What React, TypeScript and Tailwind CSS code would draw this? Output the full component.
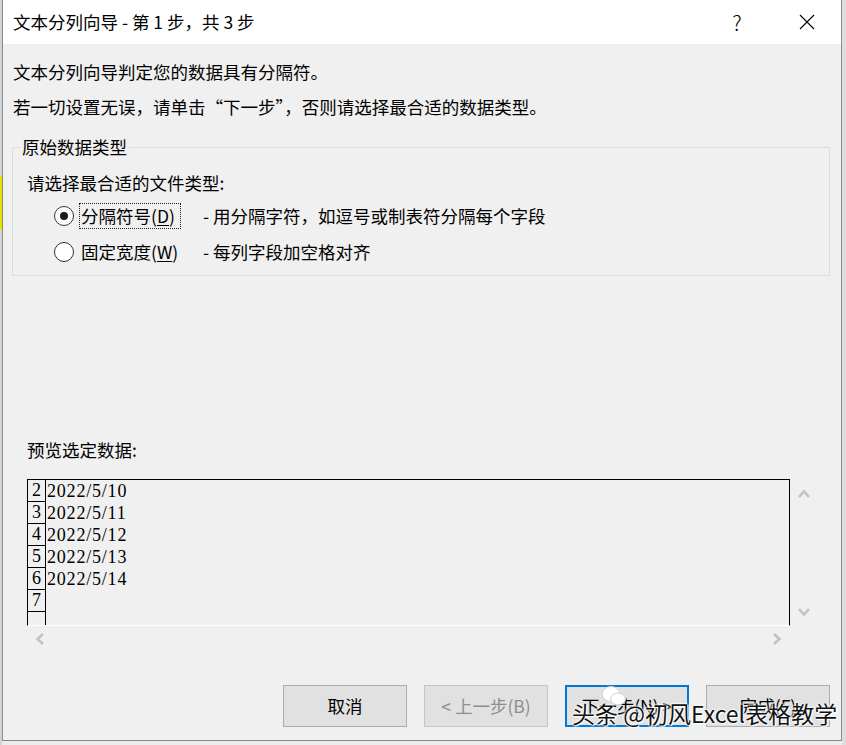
import React from "react";

const ui = "font-['Noto_Sans_CJK_SC',sans-serif]";

function Chevron({ dir }: { dir: "up" | "down" | "left" | "right" }) {
  const pts = {
    up: "1,9 6,3.5 11,9",
    down: "1,2 6,7.5 11,2",
    left: "8,1 2.5,6 8,11",
    right: "2,1 7.5,6 2,11",
  }[dir];
  const vertical = dir === "up" || dir === "down";
  return (
    <svg
      width={vertical ? 12 : 10}
      height={vertical ? 10 : 12}
      viewBox={vertical ? "0 0 12 10" : "0 0 10 12"}
    >
      <polyline points={pts} fill="none" stroke="#c2c2c2" strokeWidth="2.6" />
    </svg>
  );
}

function Radio({ checked }: { checked?: boolean }) {
  return (
    <span className="flex h-[20px] w-[20px] items-center justify-center rounded-full border border-[#333] bg-white">
      {checked && <span className="h-[8px] w-[8px] rounded-full bg-[#1a1a1a]" />}
    </span>
  );
}

const rows = ["2", "3", "4", "5", "6", "7", ""];
const dates = ["2022/5/10", "2022/5/11", "2022/5/12", "2022/5/13", "2022/5/14", "", ""];

export default function App() {
  return (
    <div className={`flex h-[745px] w-[846px] overflow-hidden bg-[#ececec] text-black ${ui}`}>
      {/* excel behind, left edge */}
      <div className="flex w-[2px] flex-col">
        <div className="h-[176px] bg-[#d4d4d4]" />
        <div className="h-[54px] bg-[#e3e300]" />
        <div className="flex-1 bg-[#d4d4d4]" />
      </div>

      <div className="relative flex h-[741px] w-[840px] flex-col border-x border-b border-[#8a8a8a] bg-[#f0f0f0]">
        {/* title bar */}
        <div className="flex h-[44px] items-center bg-white pr-[11px] pl-[10px]">
          <span className="text-[17.5px] leading-[24px]">文本分列向导 - 第 1 步，共 3 步</span>
          <div className="flex-1" />
          <div className="flex w-[46px] justify-center text-[21px] font-light leading-[24px]">?</div>
          <div className="ml-[24px] flex w-[46px] justify-center">
            <svg width="16" height="16" viewBox="0 0 16 16">
              <path d="M1 1 L15 15 M15 1 L1 15" stroke="#000" strokeWidth="1.1" />
            </svg>
          </div>
        </div>

        <div className="mt-[16px] ml-[10px] text-[17.5px] leading-[24px]">
          文本分列向导判定您的数据具有分隔符。
        </div>
        <div className="mt-[11px] ml-[10px] text-[17.5px] leading-[24px]">
          若一切设置无误，请单击“下一步”，否则请选择最合适的数据类型。
        </div>

        <fieldset className="mt-[16px] ml-[9px] w-[818px] border border-[#dcdcdc] pb-[10px]">
          <legend className="ml-[7px] px-[2px] text-[17.5px] leading-[24px]">原始数据类型</legend>
          <div className="mt-[12px] pl-[14px] text-[17.5px] leading-[24px]">请选择最合适的文件类型:</div>

          <div className="mt-[8px] flex h-[26px] items-center pl-[41px] text-[17.5px]">
            <Radio checked />
            <span className="ml-[5px] flex h-[26px] w-[102px] items-center border border-dotted border-[#222] px-[1px] leading-[24px]">
              分隔符号(<span className="underline underline-offset-2">D</span>)
            </span>
            <span className="ml-[22px] leading-[24px]">- 用分隔字符，如逗号或制表符分隔每个字段</span>
          </div>

          <div className="mt-[10px] flex h-[26px] items-center pl-[41px] text-[17.5px]">
            <Radio />
            <span className="ml-[5px] flex h-[26px] w-[102px] items-center border border-transparent px-[1px] leading-[24px]">
              固定宽度(<span className="underline underline-offset-2">W</span>)
            </span>
            <span className="ml-[22px] leading-[24px]">- 每列字段加空格对齐</span>
          </div>
        </fieldset>

        <div className="mt-[162px] ml-[24px] text-[17.5px] leading-[24px]">预览选定数据:</div>

        <div className="mt-[17px] ml-[24px] flex flex-col">
          <div className="flex">
            <div className="h-[147px] w-[763px] overflow-hidden border-x border-t border-b border-x-black border-t-black border-b-white">
              {rows.map((n, i) => (
                <div key={i} className="flex h-[22px]">
                  <div className="flex h-[22px] w-[18px] items-end justify-center border-r border-b border-black font-['Liberation_Serif',serif] text-[18px] leading-[22px]">
                    {n}
                  </div>
                  <div className="pl-[1px] font-['Liberation_Serif',serif] text-[18px] leading-[22px] tracking-[0.8px]">
                    {dates[i]}
                  </div>
                </div>
              ))}
            </div>
            <div className="flex w-[27px] flex-col items-center justify-between py-[9px]">
              <Chevron dir="up" />
              <Chevron dir="down" />
            </div>
          </div>
          <div className="flex h-[26px] w-[763px] items-center justify-between px-[8px]">
            <Chevron dir="left" />
            <Chevron dir="right" />
          </div>
        </div>

        <div className="mt-[33px] flex justify-end gap-[17px] pr-[11px] text-[17.5px]">
          <button className="h-[42px] w-[124px] border border-[#adadad] bg-[#e1e1e1]">取消</button>
          <button className="h-[42px] w-[124px] border border-[#c4c4c4] bg-[#e1e1e1] text-[#8d8d8d]">
            &lt; 上一步(B)
          </button>
          <button className="h-[42px] w-[124px] border-2 border-[#0078d7] bg-[#e1e1e1]">下一步(N) &gt;</button>
          <button className="h-[42px] w-[124px] border border-[#adadad] bg-[#e1e1e1]">完成(F)</button>
        </div>

        {/* watermark overlay */}
        <div className="pointer-events-none absolute top-[684px] left-[597px]">
          <svg width="28" height="24" viewBox="0 0 28 24">
            <ellipse cx="11" cy="10" rx="9" ry="7.5" fill="#fff" stroke="#d0d0d0" strokeWidth="1" />
            <ellipse cx="18" cy="15" rx="7.5" ry="6" fill="#fff" stroke="#d0d0d0" strokeWidth="1" />
          </svg>
        </div>
        <div className="pointer-events-none absolute top-[698px] left-[569px] text-[23px] leading-[30px] text-[#111] [text-shadow:0_0_2px_#fff,0_0_2px_#fff,0_0_3px_#fff,1px_1px_1px_#fff]">
          头条 @初风Excel表格教学
        </div>
      </div>

      <div className="flex-1 bg-[#dedede]" />
    </div>
  );
}
